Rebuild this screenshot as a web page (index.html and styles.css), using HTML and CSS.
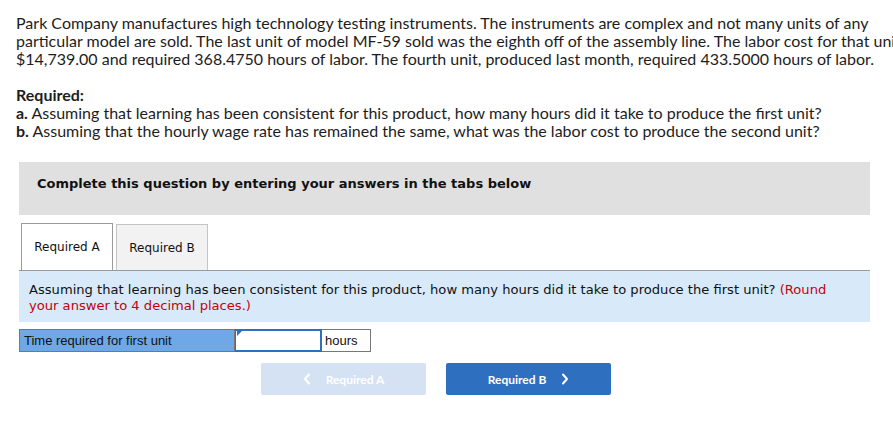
FILE: index.html
```html
<!DOCTYPE html>
<html>
<head>
<meta charset="utf-8">
<link rel="stylesheet" href="styles.css">
</head>
<body>
<div class="page">
  <p class="intro">Park Company manufactures high technology testing instruments. The instruments are complex and not many units of any particular model are sold. The last unit of model MF-59 sold was the eighth off of the assembly line. The labor cost for that unit was $14,739.00 and required 368.4750 hours of labor. The fourth unit, produced last month, required 433.5000 hours of labor.</p>
  <div class="required">
    <div class="req-title">Required:</div>
    <div><b>a.</b> Assuming that learning has been consistent for this product, how many hours did it take to produce the first unit?</div>
    <div><b>b.</b> Assuming that the hourly wage rate has remained the same, what was the labor cost to produce the second unit?</div>
  </div>
  <div class="complete-box">Complete this question by entering your answers in the tabs below</div>
  <div class="tabs">
    <div class="tab active">Required A</div>
    <div class="tab">Required B</div>
  </div>
  <div class="panel">Assuming that learning has been consistent for this product, how many hours did it take to produce the first unit? <span class="red">(Round your answer to 4 decimal places.)</span></div>
  <div class="answer-row">
    <div class="cell label">Time required for first unit</div>
    <div class="cell input"><span class="flag"></span></div>
    <div class="cell unit">hours</div>
  </div>
  <div class="nav">
    <div class="btn disabled"><svg class="chev left" width="8" height="12" viewBox="0 0 8 12"><path d="M6 1.5 L2 6 L6 10.5" fill="none" stroke="#fff" stroke-width="2" stroke-linecap="round" stroke-linejoin="round"/></svg>Required A</div>
    <div class="btn primary">Required B<svg class="chev right" width="8" height="12" viewBox="0 0 8 12"><path d="M2 1.5 L6 6 L2 10.5" fill="none" stroke="#fff" stroke-width="2" stroke-linecap="round" stroke-linejoin="round"/></svg></div>
  </div>
</div>
</body>
</html>
```

FILE: styles.css
```css
html, body {
  margin: 0;
  padding: 0;
  background: #fff;
  overflow: hidden;
}
.page {
  padding: 14px 0 0 16px;
  width: 916px;
}
.intro {
  margin: 0;
  font-family: "Lato", "Open Sans", sans-serif;
  font-size: 16px;
  line-height: 18px;
  color: #1d1d1d;
}
.required {
  margin-top: 18px;
  font-family: "Lato", "Open Sans", sans-serif;
  font-size: 16px;
  line-height: 18px;
  color: #1d1d1d;
}
.req-title {
  font-weight: bold;
}
.complete-box {
  margin: 22px 0 0 3px;
  width: 851px;
  height: 53px;
  box-sizing: border-box;
  padding: 14px 0 0 18px;
  background: #e0e0e0;
  font-family: "DejaVu Sans", Verdana, sans-serif;
  font-weight: bold;
  font-size: 13px;
  color: #111;
}
.tabs {
  display: flex;
  gap: 3px;
  margin: 8px 0 0 5px;
  height: 47px;
  align-items: flex-end;
}
.tab {
  box-sizing: border-box;
  width: 92px;
  height: 46px;
  display: flex;
  align-items: center;
  justify-content: center;
  font-family: "DejaVu Sans", Verdana, sans-serif;
  font-size: 12px;
  color: #111;
  background: #f2f2f2;
  border: 1px solid #c4c4c4;
  border-bottom: none;
}
.tab.active {
  background: #fff;
  border-color: #9a9a9a;
  height: 47px;
}
.panel {
  margin-left: 3px;
  width: 851px;
  box-sizing: border-box;
  border-top: 1px solid #9a9a9a;
  background: #d8eaf9;
  padding: 11px 30px 8px 10px;
  font-family: "DejaVu Sans", Verdana, sans-serif;
  font-size: 13.1px;
  line-height: 16px;
  color: #111;
  min-height: 52px;
}
.red {
  color: #c4000f;
}
.answer-row {
  display: flex;
  margin: 7px 0 0 3px;
  height: 23px;
  font-family: "Liberation Sans", Arial, sans-serif;
  font-size: 13px;
  color: #111;
}
.cell {
  box-sizing: border-box;
  height: 23px;
  display: flex;
  align-items: center;
}
.label {
  width: 216px;
  background: #6ea8e6;
  border: 1px solid #777;
  padding-left: 4px;
}
.input {
  width: 87px;
  background: #fff;
  border: 2px solid #2f6fc0;
  border-left-width: 1px;
  position: relative;
}
.flag {
  position: absolute;
  left: 1px;
  top: 0;
  width: 0;
  height: 0;
  border-top: 5px solid #2f6fc0;
  border-right: 5px solid transparent;
}
.unit {
  width: 49px;
  background: #fff;
  border: 1px solid #777;
  border-left: none;
  padding-left: 3px;
}
.nav {
  display: flex;
  gap: 20px;
  margin: 11px 0 0 245px;
}
.btn {
  width: 165px;
  height: 32px;
  border-radius: 2px;
  display: flex;
  align-items: center;
  justify-content: center;
  font-family: "Lato", "Open Sans", sans-serif;
  font-weight: bold;
  font-size: 12px;
  color: #fff;
}
.btn.disabled {
  background: #d5e2f4;
}
.btn.primary {
  background: #2e6fc0;
}
.chev.left {
  margin-right: 15px;
}
.chev.right {
  margin-left: 15px;
}
```
